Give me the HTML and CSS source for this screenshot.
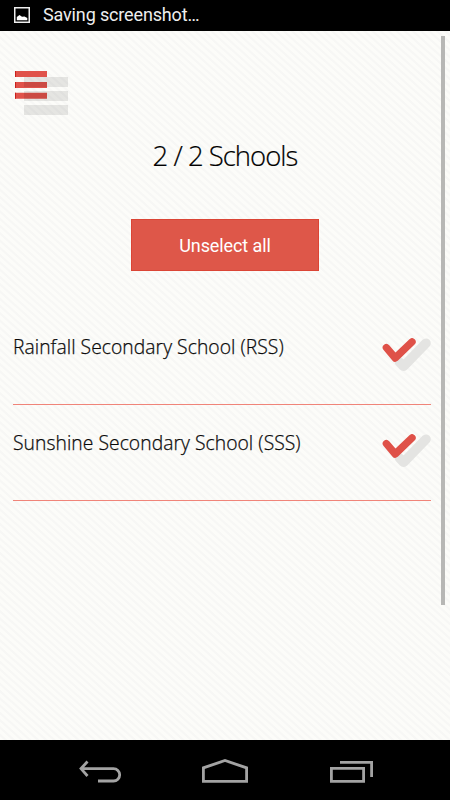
FILE: index.html
```
<!DOCTYPE html>
<html lang="en">
<head>
    <meta charset="UTF-8">
    <title>Schools</title>
    <link rel="stylesheet" href="styles.css">
</head>
<body>
<div class="status">
    <svg class="pic" width="16" height="16" viewBox="0 0 16 16">
        <rect x="0.75" y="0.75" width="14.5" height="14.5" fill="none" stroke="#eee" stroke-width="1.5"/>
        <path d="M2.8 13.3V10L5.5 8L8 9.8L10.5 9.4L13.3 11V13.3Z" fill="#fff"/>
    </svg>
    <span class="status-text">Saving screenshot…</span>
</div>
<div class="page">
    <svg class="menu" width="53" height="44" viewBox="0 0 53 44">
        <path d="M0 0h32v6H0zM0 11h32v6H0zM0 21.7h32v6H0z" fill="#e0524a"/>
        <path d="M0 0h1v6H0zM0 11h1v6H0zM0 21.7h1v6H0z" fill="#c9201c"/>
        <path d="M9 6h44v10H9zM9 20h44v10H9zM9 34h44v10H9z" fill="#000" fill-opacity="0.09"/>
    </svg>
    <h1>2 / 2 Schools</h1>
    <button class="toggle">Unselect all</button>
    <ul class="schools">
        <li>
            <span class="name">Rainfall Secondary School (RSS)</span>
            <svg class="check" width="49" height="34" viewBox="0 0 49 34">
                <path d="M17.5 24L21.5 28.3L44 5.2" fill="none" stroke="#e4e4e2" stroke-width="9.6" stroke-linecap="round" stroke-linejoin="round"/>
                <path d="M4.4 9.6L13.2 20L30 3.9" fill="none" stroke="#df5148" stroke-width="7.4" stroke-linecap="round" stroke-linejoin="round"/>
            </svg>
        </li>
        <li>
            <span class="name">Sunshine Secondary School (SSS)</span>
            <svg class="check" width="49" height="34" viewBox="0 0 49 34">
                <path d="M17.5 24L21.5 28.3L44 5.2" fill="none" stroke="#e4e4e2" stroke-width="9.6" stroke-linecap="round" stroke-linejoin="round"/>
                <path d="M4.4 9.6L13.2 20L30 3.9" fill="none" stroke="#df5148" stroke-width="7.4" stroke-linecap="round" stroke-linejoin="round"/>
            </svg>
        </li>
    </ul>
    <div class="scroll"></div>
</div>
<div class="nav">
    <svg width="44" height="25" viewBox="0 0 44 25">
        <path d="M2 10.6H34.5A6.2 6.2 0 0 1 34.5 23H19M8.5 3.5L2 10.6L8.5 18" fill="none" stroke="#a3a3a3" stroke-width="2.8"/>
    </svg>
    <svg class="home" width="46" height="25" viewBox="0 0 46 25">
        <path d="M1.4 23.4V9.8L23 2.5L44.6 9.8V23.4Z" fill="none" stroke="#a3a3a3" stroke-width="2.8"/>
    </svg>
    <svg width="43" height="25" viewBox="0 0 43 25">
        <path d="M1.4 10.4H33.6V23.4H1.4ZM10 4.4H41.6V19" fill="none" stroke="#a3a3a3" stroke-width="2.8"/>
    </svg>
</div>
</body>
</html>
```
FILE: styles.css
```
* {margin: 0; padding: 0; box-sizing: border-box;}
body {height: 800px; overflow: hidden; display: flex; flex-direction: column; font-family: "Open Sans", sans-serif; color: #111; background: #000;}

.status {height: 31px; padding-left: 14px; display: flex; align-items: flex-start; gap: 13px; background: #000;}
.pic {margin-top: 7px;}
.status-text {font: 18px/29px Roboto, sans-serif; letter-spacing: -0.15px; color: #eee;}

.page {position: relative; height: 709px; padding: 40px 19px 0 13px; display: flex; flex-direction: column; background: repeating-linear-gradient(42deg, #fcfcf9 0, #fcfcf9 2.4px, #f7f7f5 3.2px, #f7f7f5 4.6px, #fcfcf9 5.4px);}
.menu {margin-left: 2px;}
h1 {margin: 21px 0 0 6px; font-size: 27.5px; font-weight: 300; line-height: 40px; letter-spacing: -1px; text-align: center; color: #000; -webkit-text-stroke: 0.2px #000;}
.toggle {width: 188px; height: 52px; margin: 43px 0 0 118px; padding-top: 2px; border: 1px solid #db4535; background: #de5749; color: #fff; font: 18px/48px Roboto, sans-serif; letter-spacing: -0.1px;}
.schools {margin-top: 38px; list-style: none;}
.schools li {height: 96px; padding-top: 28px; display: flex; justify-content: space-between; align-items: flex-start; border-bottom: 1px solid #f08479;}
.name {font-size: 19.3px; font-weight: 300; line-height: 20px; letter-spacing: 0.05px; -webkit-text-stroke: 0.25px #000;}
.check {margin-top: 1px;}
.scroll {position: absolute; top: 5px; right: 5px; width: 4px; height: 569px; background: #b7b7b5;}

.nav {height: 60px; padding: 18px 77px 0 79px; display: flex; justify-content: space-between; background: #000;}
.home {margin-right: 4px;}
```
